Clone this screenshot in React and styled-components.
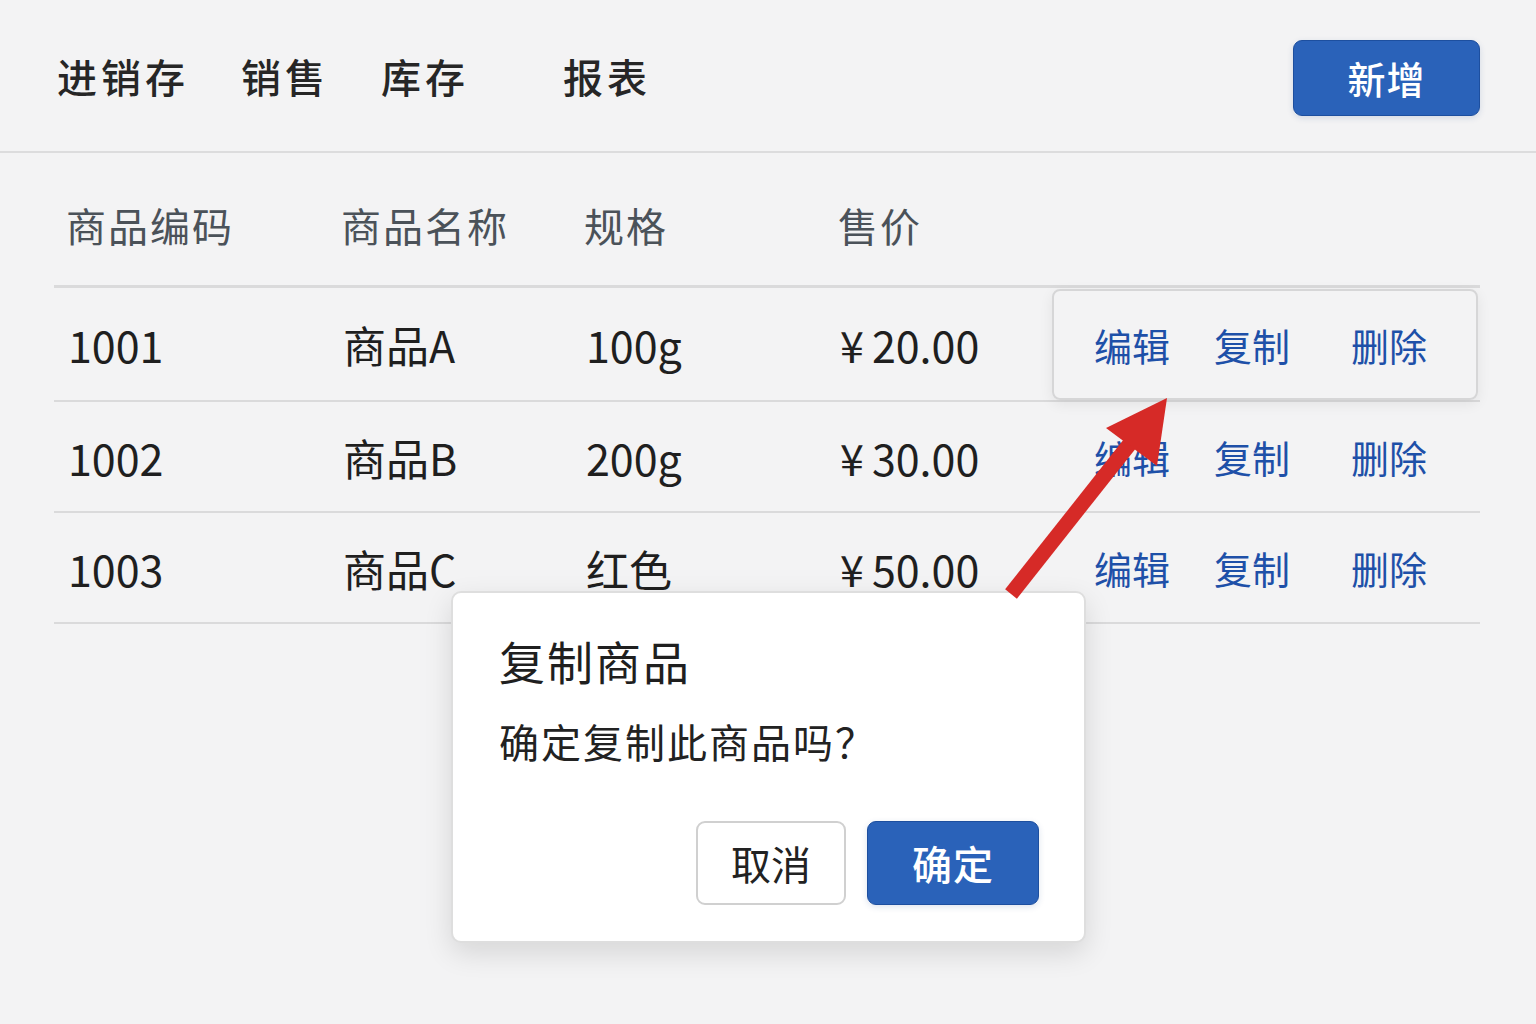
import styled, { createGlobalStyle } from 'styled-components';

const GlobalStyle = createGlobalStyle`
  html, body {
    margin: 0;
    padding: 0;
    background: #f3f3f4;
  }
  body {
    font-family: "Noto Sans CJK SC", "Noto Sans", "Liberation Sans", sans-serif;
    color: #222;
  }
`;

const Page = styled.div`
  position: relative;
  width: 1536px;
  height: 1024px;
  background: #f3f3f4;
  overflow: hidden;
`;

const Header = styled.header`
  height: 153px;
  display: flex;
  align-items: center;
  justify-content: space-between;
  padding: 0 56px 0 57px;
  border-bottom: 2px solid #dcdcdd;
  box-sizing: border-box;
`;

const Nav = styled.nav`
  display: flex;
  align-items: center;
  gap: 52px;
`;

const NavItem = styled.span`
  font-size: 40px;
  font-weight: 500;
  letter-spacing: 4px;
  color: #262626;
  margin-left: ${(p) => p.$push || 0}px;
`;

const PrimaryButton = styled.button`
  font-family: inherit;
  width: ${(p) => p.$w}px;
  height: ${(p) => p.$h}px;
  margin-top: ${(p) => p.$top || 0}px;
  border: 1px solid #1d4f9f;
  border-radius: 9px;
  background: #2a62b9;
  color: #fff;
  font-size: ${(p) => p.$size}px;
  font-weight: 500;
  letter-spacing: 1px;
  display: flex;
  align-items: center;
  justify-content: center;
  padding: 0;
  box-shadow: 0 2px 6px rgba(30, 70, 140, 0.15);
`;

const Table = styled.div`
  margin: 0 56px 0 54px;
`;

const Row = styled.div`
  display: grid;
  grid-template-columns: 275px 243px 254px 226px 428px;
  height: ${(p) => p.$h}px;
  border-bottom: ${(p) => p.$thick ? 3 : 2}px solid #dadadb;
  box-sizing: border-box;
`;

const HeadCell = styled.div`
  display: flex;
  align-items: center;
  padding: 12px 0 0 12px;
  font-size: 40px;
  letter-spacing: 2px;
  color: #4b5259;
`;

const Cell = styled.div`
  display: flex;
  align-items: center;
  padding-left: 14px;
  font-size: 43px;
  color: #1f1f1f;
`;

const Currency = styled.span`
  margin-right: 8px;
`;

const Actions = styled.div`
  display: flex;
  align-items: center;
  padding-left: 40px;
  margin: ${(p) => (p.$active ? '1px 2px 0 0' : '0')};
  border: 2px solid ${(p) => (p.$active ? '#d6d6d7' : 'transparent')};
  border-radius: 8px;
  box-shadow: ${(p) => (p.$active ? '0 4px 14px rgba(0,0,0,0.07)' : 'none')};
  box-sizing: border-box;
`;

const ActionLink = styled.span`
  font-size: 38px;
  color: #1e50a8;
  margin-right: ${(p) => p.$space || 0}px;
`;

const Dialog = styled.div`
  position: absolute;
  left: 451px;
  top: 591px;
  width: 635px;
  height: 352px;
  box-sizing: border-box;
  background: #fff;
  border: 2px solid #dedede;
  border-radius: 10px;
  box-shadow: 0 10px 28px rgba(0, 0, 0, 0.12);
  padding: 37px 45px 0 46px;
  display: flex;
  flex-direction: column;
`;

const DialogTitle = styled.div`
  font-size: 46px;
  line-height: 60px;
  font-weight: 400;
  letter-spacing: 2px;
  color: #1f1f1f;
`;

const DialogText = styled.div`
  margin-top: 24px;
  font-size: 40px;
  line-height: 54px;
  letter-spacing: 2px;
  color: #222;
`;

const DialogFooter = styled.div`
  margin-top: 53px;
  display: flex;
  justify-content: flex-end;
  gap: 21px;
`;

const GhostButton = styled.button`
  font-family: inherit;
  width: 150px;
  height: 84px;
  border: 2px solid #d0d0d0;
  border-radius: 9px;
  background: #fff;
  color: #222;
  font-size: 40px;
  padding: 0;
`;

const ArrowLayer = styled.svg`
  position: absolute;
  left: 0;
  top: 0;
  pointer-events: none;
`;

const products = [
  { code: '1001', name: '商品A', spec: '100g', price: '20.00' },
  { code: '1002', name: '商品B', spec: '200g', price: '30.00' },
  { code: '1003', name: '商品C', spec: '红色', price: '50.00' },
];

export default function App() {
  return (
    <Page>
      <GlobalStyle />
      <Header>
        <Nav>
          <NavItem>进销存</NavItem>
          <NavItem>销售</NavItem>
          <NavItem>库存</NavItem>
          <NavItem $push={42}>报表</NavItem>
        </Nav>
        <PrimaryButton $w={187} $h={76} $size={38} $top={4}>新增</PrimaryButton>
      </Header>

      <Table>
        <Row $h={135} $thick>
          <HeadCell>商品编码</HeadCell>
          <HeadCell>商品名称</HeadCell>
          <HeadCell>规格</HeadCell>
          <HeadCell>售价</HeadCell>
          <HeadCell />
        </Row>
        {products.map((p, i) => (
          <Row key={p.code} $h={i === 0 ? 114 : 111}>
            <Cell>{p.code}</Cell>
            <Cell>{p.name}</Cell>
            <Cell>{p.spec}</Cell>
            <Cell><Currency>¥</Currency>{p.price}</Cell>
            <Actions $active={i === 0}>
              <ActionLink $space={44}>编辑</ActionLink>
              <ActionLink $space={61}>复制</ActionLink>
              <ActionLink>删除</ActionLink>
            </Actions>
          </Row>
        ))}
      </Table>

      <Dialog>
        <DialogTitle>复制商品</DialogTitle>
        <DialogText>确定复制此商品吗？</DialogText>
        <DialogFooter>
          <GhostButton>取消</GhostButton>
          <PrimaryButton $w={172} $h={84} $size={40}>确定</PrimaryButton>
        </DialogFooter>
      </Dialog>

      <ArrowLayer width="1536" height="1024" viewBox="0 0 1536 1024">
        <line x1="1011" y1="594" x2="1136" y2="436" stroke="#d62a27" strokeWidth="15" />
        <polygon points="1167,398 1106,428 1157,466" fill="#d62a27" />
      </ArrowLayer>
    </Page>
  );
}
